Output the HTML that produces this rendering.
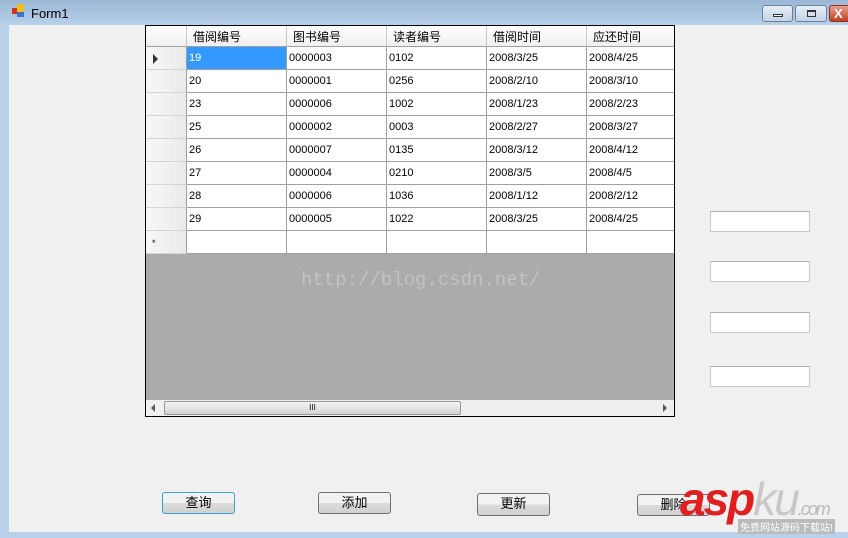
<!DOCTYPE html>
<html><head><meta charset="utf-8"><style>
*{margin:0;padding:0;box-sizing:border-box}
body{width:848px;height:538px;overflow:hidden;background:#b9d1ea;font-family:"Liberation Sans","Noto Sans CJK SC",sans-serif;position:relative}
.title{position:absolute;left:0;top:0;width:848px;height:26px;background:linear-gradient(#9bb7d6,#b9d1ea)}
.client{position:absolute;left:9px;top:25px;width:839px;height:507px;background:#f0f0f0}
.a{position:absolute}
.r{display:flex;height:23px;white-space:nowrap}
.r div{width:100px;flex:none;border-right:1px solid #a0a0a0;border-bottom:1px solid #a0a0a0;background:#fff;font-size:11px;padding:5px 0 0 2px;height:23px}
.r div.rh{width:41px;background:linear-gradient(90deg,#f7f7f7,#eaeaea);border-bottom-color:#d4d4d4;border-right-color:#a0a0a0;position:relative}
.h{display:flex;height:21px;white-space:nowrap}
.h div{width:100px;flex:none;height:21px;border-right:1px solid #c8c8c8;border-bottom:1px solid #a0a0a0;background:linear-gradient(#fff,#f0f0f0);font-size:12px;padding:2px 0 0 6px}
.h div.rh{width:41px}
.btn{position:absolute;width:73px;height:22px;border:1px solid #707070;border-radius:3px;background:linear-gradient(#f2f2f2 50%,#dcdcdc 50%,#d0d0d0);font-size:13px;text-align:center;line-height:20px}
.tb{position:absolute;left:710px;width:100px;height:21px;background:#fff;border:1px solid #c8c8c8;border-top-color:#abadb3}
.wb{position:absolute;top:5px;height:17px;border:1px solid #6d7f99;border-radius:3px;background:linear-gradient(#e6eef8,#c4d3e6)}
</style></head><body>
<div class="title"></div>
<div class="a" style="left:12px;top:8px;width:6px;height:6px;background:#d03020"></div>
<div class="a" style="left:17px;top:4px;width:7px;height:8px;background:#f0c020"></div>
<div class="a" style="left:17px;top:12px;width:7px;height:5px;background:#4070d0"></div>
<div class="a" style="left:31px;top:6px;font-size:13px;color:#000">Form1</div>
<div class="wb" style="left:762px;width:31px"><div class="a" style="left:10px;top:8px;width:10px;height:3px;border:1px solid #333;background:#fff"></div></div>
<div class="wb" style="left:795px;width:32px"><div class="a" style="left:11px;top:4px;width:9px;height:7px;border:1px solid #333;border-top-width:2px"></div></div>
<div class="wb" style="left:829px;width:25px;background:linear-gradient(#e8a090,#c04020);border-color:#8a3020"><div class="a" style="left:4px;top:0;color:#fff;font-weight:bold;font-size:13px">X</div></div>
<div class="client"></div>
<div class="a" style="left:145px;top:25px;width:530px;height:392px;border:1px solid #000;background:#ababab;overflow:hidden">
<div class="h"><div class="rh"></div><div>借阅编号</div><div>图书编号</div><div>读者编号</div><div>借阅时间</div><div>应还时间</div></div>
<div class="r"><div class="rh"><span style="position:absolute;left:7px;top:7px;border-left:5px solid #333;border-top:5px solid transparent;border-bottom:5px solid transparent"></span></div><div style="background:#3399ff;color:#fff">19</div><div>0000003</div><div>0102</div><div>2008/3/25</div><div>2008/4/25</div></div>
<div class="r"><div class="rh"></div><div>20</div><div>0000001</div><div>0256</div><div>2008/2/10</div><div>2008/3/10</div></div>
<div class="r"><div class="rh"></div><div>23</div><div>0000006</div><div>1002</div><div>2008/1/23</div><div>2008/2/23</div></div>
<div class="r"><div class="rh"></div><div>25</div><div>0000002</div><div>0003</div><div>2008/2/27</div><div>2008/3/27</div></div>
<div class="r"><div class="rh"></div><div>26</div><div>0000007</div><div>0135</div><div>2008/3/12</div><div>2008/4/12</div></div>
<div class="r"><div class="rh"></div><div>27</div><div>0000004</div><div>0210</div><div>2008/3/5</div><div>2008/4/5</div></div>
<div class="r"><div class="rh"></div><div>28</div><div>0000006</div><div>1036</div><div>2008/1/12</div><div>2008/2/12</div></div>
<div class="r"><div class="rh"></div><div>29</div><div>0000005</div><div>1022</div><div>2008/3/25</div><div>2008/4/25</div></div>
<div class="r"><div class="rh" style="font-size:9px;padding:7px 0 0 6px">*</div><div></div><div></div><div></div><div></div><div></div></div>
<div class="a" style="left:155px;top:243px;color:#c2c2c2;font-size:19px;font-family:'Liberation Mono',monospace">http://blog.csdn.net/</div>
<div class="a" style="left:0;top:374px;width:528px;height:16px;background:#efefef">
<div class="a" style="left:5px;top:4px;border-right:4px solid #555;border-top:4px solid transparent;border-bottom:4px solid transparent"></div>
<div class="a" style="left:18px;top:1px;width:297px;height:14px;border:1px solid #999;border-radius:2px;background:linear-gradient(#f4f4f4,#d4d4d4);font-size:8px;text-align:center;line-height:12px">III</div>
<div class="a" style="left:517px;top:4px;border-left:4px solid #555;border-top:4px solid transparent;border-bottom:4px solid transparent"></div>
</div>
</div>
<div class="tb" style="top:211px"></div>
<div class="tb" style="top:261px"></div>
<div class="tb" style="top:312px"></div>
<div class="tb" style="top:366px"></div>
<div class="btn" style="left:162px;top:492px;border-color:#3c9fd8">查询</div>
<div class="btn" style="left:318px;top:492px">添加</div>
<div class="btn" style="left:477px;top:493px;height:23px">更新</div>
<div class="btn" style="left:637px;top:494px">删除</div>
<div class="a" style="left:680px;top:474px;font-size:46px;font-weight:bold;font-style:italic;color:#e02020;letter-spacing:-2px;line-height:50px">asp<span style="color:#c8c8c8;font-weight:normal">ku</span><span style="font-size:18px;color:#bbb;font-weight:normal">.com</span></div>
<div class="a" style="left:738px;top:519px;font-size:10px;color:#fff;background:#bbb;padding:0 2px">免费网站源码下载站!</div>
</body></html>
